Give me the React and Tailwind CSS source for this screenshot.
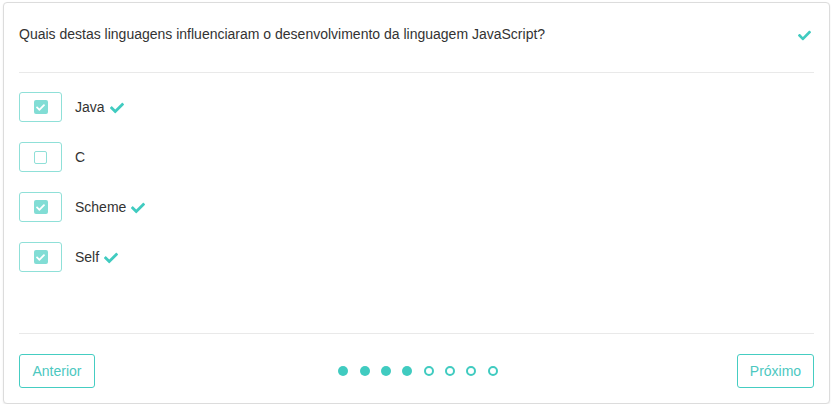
import React from 'react'

const CHECK =
  'M173.898 439.404l-166.4-166.4c-9.997-9.997-9.997-26.206 0-36.204l36.203-36.204c9.997-9.998 26.207-9.998 36.204 0L192 312.69 432.095 72.596c9.997-9.997 26.207-9.997 36.204 0l36.203 36.204c9.997 9.997 9.997 26.206 0 36.204l-294.4 294.401c-9.998 9.997-26.207 9.997-36.204-.001z'

function Check({ className }) {
  return (
    <svg viewBox="0 0 512 512" className={className} fill="currentColor">
      <path d={CHECK} />
    </svg>
  )
}

const options = [
  { label: 'Java', checked: true },
  { label: 'C', checked: false },
  { label: 'Scheme', checked: true },
  { label: 'Self', checked: true },
]

export default function App() {
  const step = 4
  return (
    <div className="pl-[3px] pt-[2px] font-['Liberation_Sans',Arial,sans-serif] text-[14px] text-[#333]">
      <div className="w-[827px] rounded-[4px] border border-[#dcdcdc] bg-white px-[15px] shadow-[0_1px_2px_rgba(0,0,0,0.08)]">
        {/* question */}
        <div className="flex h-[70px] items-start justify-between pt-[21px] border-b border-[#e9e9e9]">
          <p className="leading-[20px]">
            Quais destas linguagens influenciaram o desenvolvimento da linguagem JavaScript?
          </p>
          <Check className="mt-[5px] mr-[3px] h-[13px] w-[13px] text-[#40cbc0]" />
        </div>

        {/* options */}
        <div className="flex h-[260px] flex-col gap-[20px] pt-[19px]">
          {options.map((o) => (
            <div key={o.label} className="flex h-[30px] items-center">
              <div className="flex h-[30px] w-[43px] items-center justify-center rounded-[3px] border border-[#8fe0d8]">
                {o.checked ? (
                  <div className="flex h-[14px] w-[14px] items-center justify-center rounded-[2px] bg-[#82ddd5]">
                    <Check className="h-[9px] w-[9px] text-white" />
                  </div>
                ) : (
                  <div className="h-[13px] w-[13px] rounded-[2px] border-[1.5px] border-[#8fe0d8] bg-white" />
                )}
              </div>
              <span className="ml-[13px] leading-[20px]">{o.label}</span>
              {o.checked && <Check className="ml-[5px] mt-[1px] h-[14px] w-[14px] text-[#40cbc0]" />}
            </div>
          ))}
        </div>

        {/* footer */}
        <div className="flex items-center justify-between border-t border-[#e9e9e9] pt-[20px] pb-[15px]">
          <button className="h-[34px] w-[76px] rounded-[3px] border border-[#45cdc2] text-[14px] text-[#4cc8bf]">
            Anterior
          </button>
          <div className="ml-[4px] flex gap-[11.4px]">
            {[0, 1, 2, 3, 4, 5, 6, 7].map((i) => (
              <span
                key={i}
                className={
                  i < step
                    ? 'h-[10px] w-[10px] rounded-full bg-[#40cbc0]'
                    : 'h-[10px] w-[10px] rounded-full border-2 border-[#40cbc0]'
                }
              />
            ))}
          </div>
          <button className="h-[34px] w-[77px] rounded-[3px] border border-[#45cdc2] text-[14px] text-[#4cc8bf]">
            Próximo
          </button>
        </div>
      </div>
    </div>
  )
}
